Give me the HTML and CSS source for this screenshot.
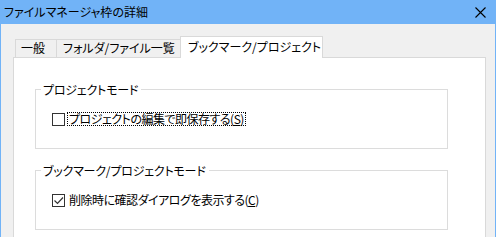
FILE: index.html
```html
<!DOCTYPE html>
<html lang="ja">
<head>
<meta charset="utf-8">
<link rel="stylesheet" href="styles.css">
</head>
<body>
<div class="window">
  <div class="titlebar">
    <span class="title">ファイルマネージャ枠の詳細</span>
    <svg class="close" width="11" height="11" viewBox="0 0 11 11"><path d="M0.5 0.5 L10.5 10.5 M10.5 0.5 L0.5 10.5" stroke="#000" stroke-width="1.1" fill="none"/></svg>
  </div>
  <div class="content">
    <div class="tabs">
      <div class="tab t1">一般</div>
      <div class="tab t2">フォルダ/ファイル一覧</div>
      <div class="tab t3 active">ブックマーク/プロジェクト</div>
    </div>
    <div class="panel">
      <div class="group">
        <div class="group-title"><span>プロジェクトモード</span></div>
        <div class="row">
          <span class="check"></span>
          <span class="label focus">プロジェクトの編集で即保存する(<u>S</u>)</span>
        </div>
      </div>
      <div class="group second">
        <div class="group-title"><span>ブックマーク/プロジェクトモード</span></div>
        <div class="row">
          <span class="check checked"><svg width="11" height="11" viewBox="0 0 11 11"><path d="M1.5 5.5 L4.5 8.5 L10 2.5" stroke="#333" stroke-width="1.2" fill="none"/></svg></span>
          <span class="label">削除時に確認ダイアログを表示する(<u>C</u>)</span>
        </div>
      </div>
    </div>
  </div>
</div>
</body>
</html>
```

FILE: styles.css
```css
html, body {
  margin: 0;
  padding: 0;
}
body {
  width: 496px;
  height: 237px;
  overflow: hidden;
  background: #f0f0f0;
  font-family: "Noto Sans CJK JP", "Noto Sans", sans-serif;
  font-size: 12px;
  color: #000;
}
body * {
  font-feature-settings: "palt";
}
.window {
  height: 237px;
  border-left: 1px solid #71b3f7;
  border-right: 1px solid #71b3f7;
  box-sizing: border-box;
  display: flex;
  flex-direction: column;
}
.titlebar {
  height: 24px;
  flex: none;
  background: #71b3f7;
  display: flex;
  align-items: center;
  justify-content: space-between;
  padding: 0 9px 0 3px;
}
.title {
  line-height: 16px;
  margin-top: -1px;
}
.close {
  display: block;
}
.content {
  flex: 1;
  padding: 12px 9px 0 12px;
  display: flex;
  flex-direction: column;
}
.tabs {
  display: flex;
  align-items: flex-end;
  padding-left: 2px;
  height: 21px;
  position: relative;
  z-index: 1;
}
.tab {
  box-sizing: border-box;
  height: 18px;
  line-height: 16px;
  padding-left: 5px;
  border: 1px solid #d9d9d9;
  border-bottom: none;
  background: #f0f0f0;
  margin-right: -1px;
  white-space: nowrap;
}
.t1 { width: 42px; }
.t2 { width: 127px; padding-left: 6px; }
.tab.active {
  width: 143px;
  height: 22px;
  line-height: 20px;
  background: #fff;
  margin-left: -2px;
  padding-left: 7px;
  margin-bottom: -1px;
  position: relative;
  z-index: 2;
}
.panel {
  flex: 1;
  background: #fff;
  border: 1px solid #d9d9d9;
  border-bottom: none;
  padding: 31px 37px 0 21px;
}
.group {
  display: flex;
  flex-direction: column;
  border: 1px solid #dcdcdc;
  border-top: none;
  padding: 0 0 21px 16px;
}
.group.second {
  margin-top: 21px;
}
.group-title {
  display: flex;
  height: 17px;
  margin: -8px -1px 0 -17px;
}
.group-title::before,
.group-title::after {
  content: "";
  height: 1px;
  margin-top: 8px;
  background: #dcdcdc;
}
.group-title::before {
  width: 6px;
}
.group-title::after {
  flex: 1;
}
.group-title span {
  line-height: 17px;
  padding: 0 3px 0 2px;
  letter-spacing: -0.2px;
}
.row {
  display: flex;
  align-items: center;
  height: 16px;
  margin-top: 13px;
}
.check {
  width: 11px;
  height: 11px;
  border: 1px solid #333;
  background: #fff;
  margin-right: 2px;
  display: flex;
  align-items: center;
  justify-content: center;
}
.check svg {
  display: block;
}
.label {
  line-height: 12px;
  padding: 0 1px;
  border: 1px dotted transparent;
  letter-spacing: -0.5px;
}
.label.focus {
  border-color: #000;
}
.label u {
  text-underline-offset: 1px;
}
```
